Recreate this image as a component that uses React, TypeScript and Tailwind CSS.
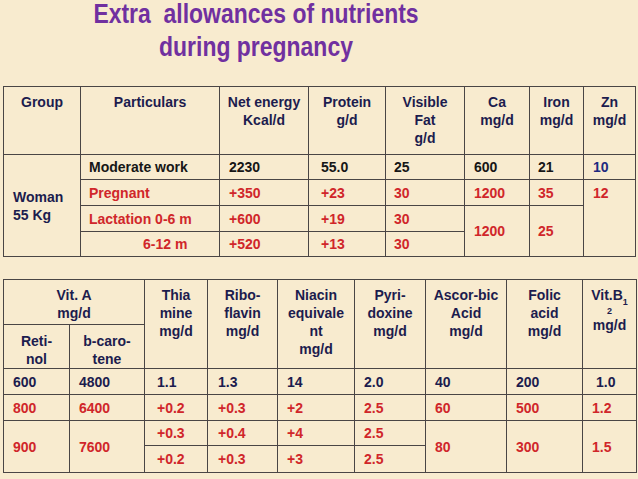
const navy = 'text-[#1c1c4e]';
const red = 'text-[#d0262a]';
const ink = 'text-[#161616]';

const th = `border border-[#4a4545] align-top pt-[6px] px-1 text-center font-bold ${navy}`;
const td = 'border border-[#4a4545] align-middle pl-[8px] pr-1 py-0 font-bold text-left';

export default function App() {
  return (
    <div
      className="w-[638px] h-[479px] bg-[#f8ebcf] overflow-hidden"
      style={{ fontFamily: '"Liberation Sans", Arial, sans-serif' }}
    >
      {/* Titre */}
      <div className="w-[512px] h-[86px] text-center">
        <h1
          className="-translate-y-[2px] text-[27px] leading-[33px] font-bold text-[#7030a0] scale-x-[0.85] whitespace-pre"
        >
          {'Extra  allowances of nutrients\nduring pregnancy'}
        </h1>
      </div>

      {/* Tabela 1 */}
      <table className="ml-[3px] w-[632px] table-fixed border-collapse text-[14px] leading-[18px]">
        <colgroup>
          <col className="w-[77px]" />
          <col className="w-[139px]" />
          <col className="w-[89px]" />
          <col className="w-[77px]" />
          <col className="w-[79px]" />
          <col className="w-[65px]" />
          <col className="w-[54px]" />
          <col className="w-[52px]" />
        </colgroup>
        <thead>
          <tr className="h-[68px]">
            <th className={th}>Group</th>
            <th className={th}>Particulars</th>
            <th className={th}>Net energy<br />Kcal/d</th>
            <th className={th}>Protein<br />g/d</th>
            <th className={th}>Visible<br />Fat<br />g/d</th>
            <th className={th}>Ca<br />mg/d</th>
            <th className={th}>Iron<br />mg/d</th>
            <th className={th}>Zn<br />mg/d</th>
          </tr>
        </thead>
        <tbody>
          <tr className="h-[25px]">
            <td rowSpan={4} className={`${td} ${navy} pl-[9px]`}>Woman<br />55 Kg</td>
            <td className={`${td} ${ink}`}>Moderate work</td>
            <td className={`${td} ${ink} pl-[9px]`}>2230</td>
            <td className={`${td} ${ink} pl-[12px]`}>55.0</td>
            <td className={`${td} ${ink}`}>25</td>
            <td className={`${td} ${ink} pl-[9px]`}>600</td>
            <td className={`${td} ${ink}`}>21</td>
            <td className={`${td} text-[#1e2a80] pl-[9px]`}>10</td>
          </tr>
          <tr className="h-[26px]">
            <td className={`${td} ${red}`}>Pregnant</td>
            <td className={`${td} ${red} pl-[9px]`}>+350</td>
            <td className={`${td} ${red} pl-[12px]`}>+23</td>
            <td className={`${td} ${red}`}>30</td>
            <td className={`${td} ${red} pl-[9px]`}>1200</td>
            <td className={`${td} ${red}`}>35</td>
            <td rowSpan={3} className={`${td} ${red} !align-top pt-[4px] pl-[9px]`}>12</td>
          </tr>
          <tr className="h-[26px]">
            <td className={`${td} ${red}`}>Lactation 0-6 m</td>
            <td className={`${td} ${red} pl-[9px]`}>+600</td>
            <td className={`${td} ${red} pl-[12px]`}>+19</td>
            <td className={`${td} ${red}`}>30</td>
            <td rowSpan={2} className={`${td} ${red} pl-[9px]`}>1200</td>
            <td rowSpan={2} className={`${td} ${red}`}>25</td>
          </tr>
          <tr className="h-[25px]">
            <td className={`${td} ${red} pl-[62px]`}>6-12 m</td>
            <td className={`${td} ${red} pl-[9px]`}>+520</td>
            <td className={`${td} ${red} pl-[12px]`}>+13</td>
            <td className={`${td} ${red}`}>30</td>
          </tr>
        </tbody>
      </table>

      {/* Tabela 2 */}
      <table className="ml-[3px] mt-[22px] w-[633px] table-fixed border-collapse text-[14px] leading-[18px]">
        <colgroup>
          <col className="w-[66px]" />
          <col className="w-[75px]" />
          <col className="w-[63px]" />
          <col className="w-[70px]" />
          <col className="w-[77px]" />
          <col className="w-[71px]" />
          <col className="w-[81px]" />
          <col className="w-[76px]" />
          <col className="w-[54px]" />
        </colgroup>
        <thead>
          <tr className="h-[45px]">
            <th colSpan={2} className={`${th} pt-[4px]`}>Vit. A<br />mg/d</th>
            <th rowSpan={2} className={`${th} pt-[4px]`}>Thia<br />mine<br />mg/d</th>
            <th rowSpan={2} className={`${th} pt-[4px]`}>Ribo-<br />flavin<br />mg/d</th>
            <th rowSpan={2} className={`${th} pt-[4px]`}>Niacin<br />equivale<br />nt<br />mg/d</th>
            <th rowSpan={2} className={`${th} pt-[4px]`}>Pyri-<br />doxine<br />mg/d</th>
            <th rowSpan={2} className={`${th} pt-[4px]`}>Ascor-bic<br />Acid<br />mg/d</th>
            <th rowSpan={2} className={`${th} pt-[4px]`}>Folic<br />acid<br />mg/d</th>
            <th rowSpan={2} className={`${th} pt-[4px]`}>
              Vit.B<sub className="text-[9px] align-[-3px]">1</sub>
              <br />
              <span className="block text-[9px] leading-[14px]">2</span>
              <span className="block -mt-[2px]">mg/d</span>
            </th>
          </tr>
          <tr className="h-[44px]">
            <th className={`${th} pt-[7px]`}>Reti-<br />nol</th>
            <th className={`${th} pt-[7px]`}>b-caro-<br />tene</th>
          </tr>
        </thead>
        <tbody>
          <tr className="h-[26px]">
            <td className={`${td} ${navy} pl-[9px]`}>600</td>
            <td className={`${td} ${navy} pl-[9px]`}>4800</td>
            <td className={`${td} ${navy} pl-[12px]`}>1.1</td>
            <td className={`${td} ${navy} pl-[10px]`}>1.3</td>
            <td className={`${td} ${navy} pl-[9px]`}>14</td>
            <td className={`${td} ${navy} pl-[9px]`}>2.0</td>
            <td className={`${td} ${navy} pl-[9px]`}>40</td>
            <td className={`${td} ${navy} pl-[9px]`}>200</td>
            <td className={`${td} ${navy} pl-[13px]`}>1.0</td>
          </tr>
          <tr className="h-[26px]">
            <td className={`${td} ${red} pl-[9px]`}>800</td>
            <td className={`${td} ${red} pl-[9px]`}>6400</td>
            <td className={`${td} ${red} pl-[12px]`}>+0.2</td>
            <td className={`${td} ${red} pl-[10px]`}>+0.3</td>
            <td className={`${td} ${red} pl-[9px]`}>+2</td>
            <td className={`${td} ${red} pl-[9px]`}>2.5</td>
            <td className={`${td} ${red} pl-[9px]`}>60</td>
            <td className={`${td} ${red} pl-[9px]`}>500</td>
            <td className={`${td} ${red} pl-[9px]`}>1.2</td>
          </tr>
          <tr className="h-[25px]">
            <td rowSpan={2} className={`${td} ${red} pl-[9px]`}>900</td>
            <td rowSpan={2} className={`${td} ${red} pl-[9px]`}>7600</td>
            <td className={`${td} ${red} pl-[12px]`}>+0.3</td>
            <td className={`${td} ${red} pl-[10px]`}>+0.4</td>
            <td className={`${td} ${red} pl-[9px]`}>+4</td>
            <td className={`${td} ${red} pl-[9px]`}>2.5</td>
            <td rowSpan={2} className={`${td} ${red} pl-[9px]`}>80</td>
            <td rowSpan={2} className={`${td} ${red} pl-[9px]`}>300</td>
            <td rowSpan={2} className={`${td} ${red} pl-[9px]`}>1.5</td>
          </tr>
          <tr className="h-[27px]">
            <td className={`${td} ${red} pl-[12px]`}>+0.2</td>
            <td className={`${td} ${red} pl-[10px]`}>+0.3</td>
            <td className={`${td} ${red} pl-[9px]`}>+3</td>
            <td className={`${td} ${red} pl-[9px]`}>2.5</td>
          </tr>
        </tbody>
      </table>
    </div>
  );
}
